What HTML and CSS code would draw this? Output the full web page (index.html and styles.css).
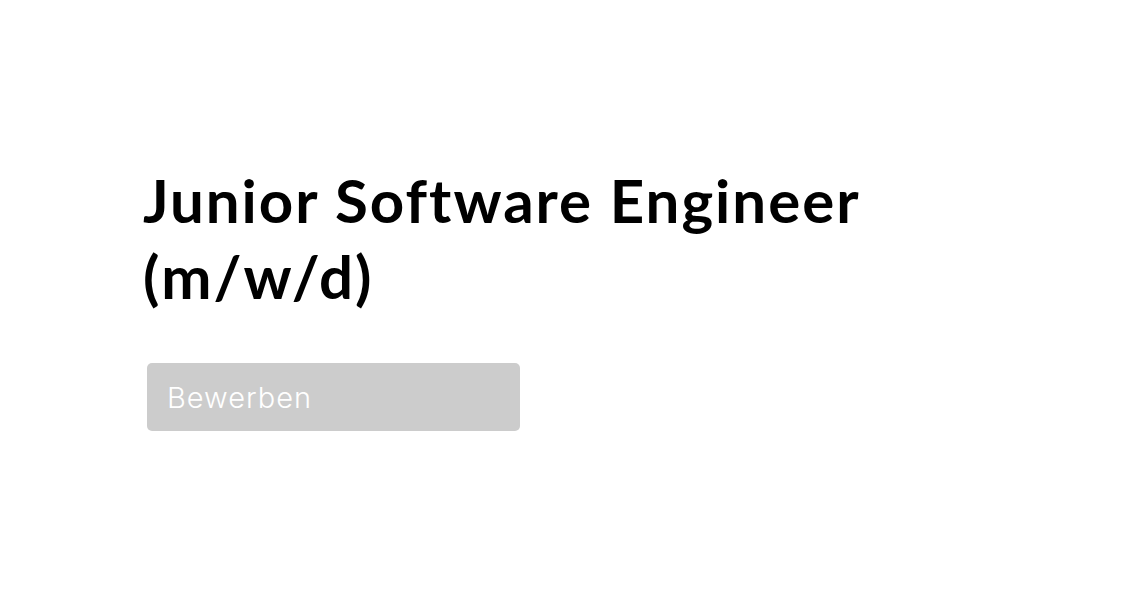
FILE: index.html
```html
<!DOCTYPE html>
<html lang="de">
<head>
<meta charset="UTF-8">
<meta name="viewport" content="width=device-width, initial-scale=1.0">
<title>Junior Software Engineer</title>
<link rel="stylesheet" href="styles.css">
</head>
<body>
    <div class="job">
        <h1 class="job-title">Junior Software Engineer (m/w/d)</h1>
        <button class="apply">Bewerben</button>
    </div>
</body>
</html>
```

FILE: styles.css
```css
* {
    box-sizing: border-box;
}
body {
    margin: 0;
    padding: 0;
    background-color: #ffffff;
    font-family: "Noto Sans", Arial, sans-serif;
}
.job {
    display: flex;
    flex-direction: column;
    align-items: flex-start;
    padding: 162px 0 0 143px;
}
.job-title {
    margin: 0;
    width: 780px;
    font-family: Lato, "Noto Sans", sans-serif;
    font-size: 60px;
    font-weight: 700;
    line-height: 76px;
    letter-spacing: 2px;
    color: #000000;
}
.apply {
    margin: 49px 0 0 4px;
    width: 373px;
    height: 68px;
    padding: 0 20px;
    border: none;
    border-radius: 5px;
    background-color: #cccccc;
    color: #ffffff;
    font-family: Inter, sans-serif;
    font-size: 29px;
    font-weight: 300;
    letter-spacing: 1px;
    text-align: left;
}
```
